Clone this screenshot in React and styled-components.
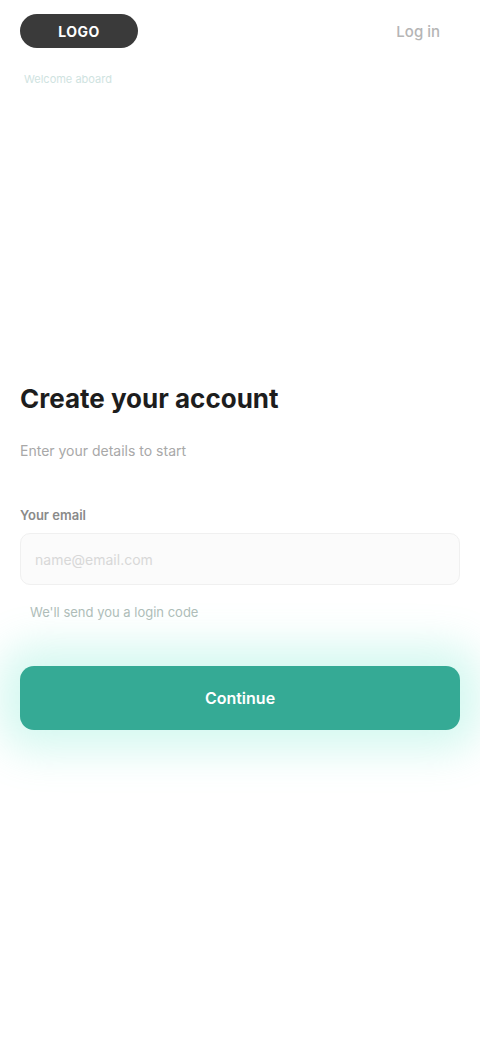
import React from "react";
import styled, { createGlobalStyle } from "styled-components";

const GlobalStyle = createGlobalStyle`
  html, body {
    margin: 0;
    padding: 0;
    background: #ffffff;
    font-family: "Inter", "Liberation Sans", sans-serif;
  }
  * { box-sizing: border-box; }
`;

const Screen = styled.div`
  width: 480px;
  min-height: 1040px;
  background: #ffffff;
  display: flex;
  flex-direction: column;
  padding: 14px 20px 0;
`;

const TopBar = styled.div`
  display: flex;
  align-items: flex-start;
  justify-content: space-between;
`;

const Brand = styled.div`
  display: flex;
  flex-direction: column;
  gap: 24px;
`;

const LogoPill = styled.div`
  width: 118px;
  height: 34px;
  border-radius: 17px;
  background: #3a3a3a;
  color: #ffffff;
  font-size: 14px;
  font-weight: 700;
  display: flex;
  align-items: center;
  justify-content: center;
  letter-spacing: 0.5px;
`;

const Tagline = styled.div`
  font-size: 11px;
  color: #cfe3df;
  padding-left: 4px;
`;

const TopLink = styled.a`
  margin-top: 8px;
  margin-right: 20px;
  font-size: 15px;
  font-weight: 500;
  color: #b5b5b5;
  text-decoration: none;
`;

const Form = styled.div`
  margin-top: 297px;
  display: flex;
  flex-direction: column;
`;

const Title = styled.h1`
  margin: 0;
  font-size: 26px;
  font-weight: 700;
  color: #1d1d1d;
  line-height: 32px;
`;

const Subtitle = styled.p`
  margin: 28px 0 0;
  font-size: 14px;
  line-height: 16px;
  color: #a8a8a8;
`;

const Label = styled.label`
  margin-top: 48px;
  font-size: 13px;
  line-height: 16px;
  font-weight: 600;
  color: #8a8a8a;
`;

const Input = styled.input`
  margin-top: 10px;
  height: 52px;
  width: 100%;
  border: 1px solid #f0f0f0;
  border-radius: 10px;
  background: #fbfbfb;
  padding: 0 14px;
  font-size: 14px;
  font-family: inherit;
  color: #333;
  outline: none;
  &::placeholder { color: #d8d8d8; }
`;

const Helper = styled.div`
  margin-top: 19px;
  padding-left: 10px;
  font-size: 13px;
  line-height: 16px;
  color: #b0bdb9;
`;

const Button = styled.button`
  margin-top: 46px;
  height: 64px;
  width: 100%;
  border: none;
  border-radius: 14px;
  background: #35aa95;
  color: #ffffff;
  font-family: inherit;
  font-size: 16px;
  font-weight: 600;
  box-shadow: 0 0 40px 20px rgba(100, 230, 200, 0.28);
`;

export default function App() {
  return (
    <>
      <GlobalStyle />
      <Screen>
        <TopBar>
          <Brand>
            <LogoPill>LOGO</LogoPill>
            <Tagline>Welcome aboard</Tagline>
          </Brand>
          <TopLink href="#">Log in</TopLink>
        </TopBar>
        <Form>
          <Title>Create your account</Title>
          <Subtitle>Enter your details to start</Subtitle>
          <Label>Your email</Label>
          <Input placeholder="name@email.com" />
          <Helper>We'll send you a login code</Helper>
          <Button>Continue</Button>
        </Form>
      </Screen>
    </>
  );
}
